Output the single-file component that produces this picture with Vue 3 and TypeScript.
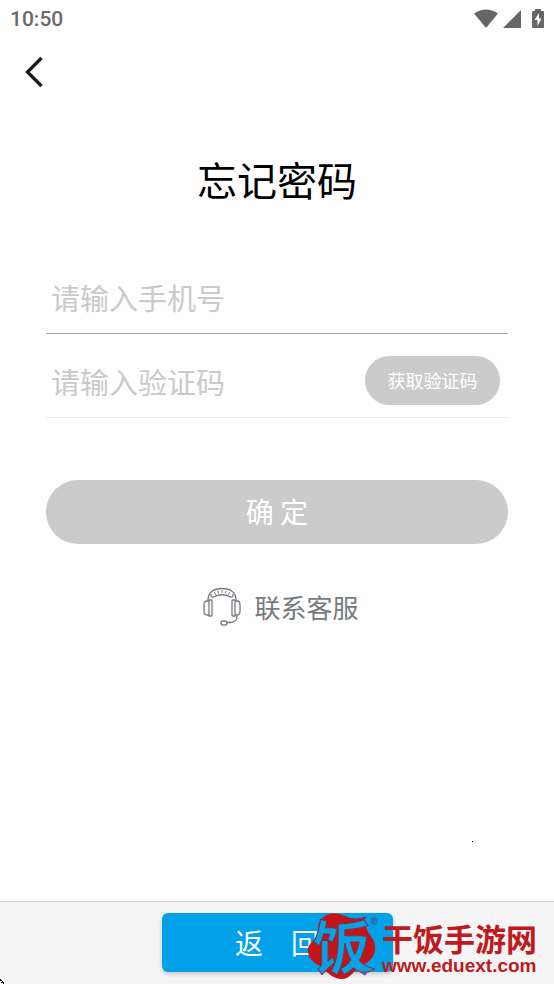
<script setup lang="ts">
import { ref } from 'vue'

const phone = ref('')
const code = ref('')
const time = '10:50'
</script>

<template>
  <div class="screen">
    <div class="status">
      <time>{{ time }}</time>
      <div class="indicators">
        <svg width="24" height="20" viewBox="0 0 24 20" aria-hidden="true">
          <path d="M0 4.500Q12-3.500 24 4.500L12 19z" />
        </svg>
        <svg width="18" height="20" viewBox="0 0 18 20" aria-hidden="true">
          <path d="M18 1V19H0z" />
        </svg>
        <svg width="12" height="20" viewBox="0 0 12 20" aria-hidden="true">
          <path fill-rule="evenodd" d="M3 0H9V2H11Q12 2 12 3V18Q12 19 11 19H1Q0 19 0 18V3Q0 2 1 2H3zM7 4L2.500 11H5.500V17L9.500 9.500H7z" />
        </svg>
      </div>
    </div>

    <header class="nav">
      <button type="button" class="back" aria-label="返回上一页">
        <svg width="20" height="32" viewBox="0 0 20 32" aria-hidden="true">
          <path d="M17.500 2L3.500 16L17.500 30" fill="none" stroke="#1b1c20" stroke-width="3.300" />
        </svg>
      </button>
    </header>

    <main>
      <h1>忘记密码</h1>
      <form @submit.prevent>
        <div class="field focused">
          <input v-model="phone" type="tel" placeholder="请输入手机号" aria-label="手机号" />
        </div>
        <div class="field">
          <input v-model="code" type="text" placeholder="请输入验证码" aria-label="验证码" />
          <button type="button" class="get-code">获取验证码</button>
        </div>
        <button type="submit" class="submit">确 定</button>
      </form>
      <a href="#" class="service">
        <svg width="38" height="40" viewBox="0 0 38 40" fill="none" stroke="#777a80" stroke-width="1.300" stroke-linecap="round" stroke-linejoin="round" aria-hidden="true">
          <path d="M5 13C5 5 11 1.500 19 1.500S33 5 33 13" />
          <path d="M8 7.500Q7.500 10.500 10.500 10Q19 5.500 27.500 10Q30.500 10.500 30 7.500" />
          <path d="M11.500 5.500L12.500 7.500M15 4L15.500 6M19 3.500V5.500M23 4L22.500 6M26.500 5.500L25.500 7.500" stroke-width="1" />
          <path d="M6 13H8Q9 13 9 14V28Q9 29 8 29H6zM6 14H4Q1 14 1 18V24Q1 28 4 28H6z" />
          <path d="M32 13H30Q29 13 29 14V28Q29 29 30 29H32zM32 14H34Q37 14 37 18V24Q37 28 34 28H32z" />
          <path d="M34 28V29Q34 35.500 27 35.500H24" />
          <rect x="18" y="34" width="6" height="4" rx="2" />
        </svg>
        <span>联系客服</span>
      </a>
    </main>

    <footer>
      <button type="button" class="return">返　回</button>
      <div class="brand">
        <svg class="mark" width="72" height="70" viewBox="0 0 72 70" aria-hidden="true">
          <path d="M13 9C17 2 26 0 34 2.500C42 6 48 8 58 5C58 9 58 13 60 18C63 24 69 29 68 37C68 46 60 51 51 56C44 62 41 70 29 66C21 63 18 57 11 53C4 49 0 43 1 36C3 30 8 29 10 22C12 17 10 14 13 9z" fill="#c31419" />
          <path d="M38 5C44 8 52 8 59 5C56 10 49 12 41 9" fill="#c31419" stroke="#7b3041" stroke-width="1" />
          <text x="6" y="57" class="mark-text">饭</text>
          <path d="M49 45Q56 55 68 57Q61 63 53 60Q46 56 42 50z" fill="#0aa0e5" />
          <path d="M49 58Q58 63 68 57Q61 56 56 52" fill="none" stroke="#94313f" stroke-width="1" />
          <circle cx="67" cy="9" r="3" fill="none" stroke="#35658b" stroke-width="1" />
          <path d="M66 11V7H68V9H66L68 11" fill="none" stroke="#35658b" stroke-width="1" />
        </svg>
        <div class="words">
          <strong>干饭手游网</strong>
          <span>www.eduext.com</span>
        </div>
      </div>
      <svg class="corner" width="5" height="5" viewBox="0 0 5 5" aria-hidden="true">
        <path d="M0 0H1V1H2V2H3V3H4V5H3V4H1V3H2V2H0z" fill="#111" />
      </svg>
    </footer>
    <i class="speck"></i>
  </div>
</template>

<style>
body {
  margin: 0;
}
</style>

<style scoped>
.screen {
  position: relative;
  display: flex;
  flex-direction: column;
  min-height: 100vh;
  background: #fefefe;
  font-family: "Noto Sans CJK SC", sans-serif;
}
button {
  padding: 0;
  border: 0;
  font-family: inherit;
  cursor: pointer;
}
.status {
  display: flex;
  align-items: center;
  justify-content: space-between;
  height: 38px;
  padding: 0 10px;
  color: #6a6a6a;
  font: 500 21px/38px Roboto, sans-serif;
}
.indicators {
  display: flex;
  gap: 5px;
  fill: #666;
}
.indicators svg:last-child {
  margin-left: 6px;
}
.nav {
  display: flex;
  align-items: center;
  height: 68px;
  padding: 0 24px;
}
.back {
  display: flex;
  background: none;
}
main {
  display: flex;
  flex-direction: column;
  align-items: center;
  padding: 43px 46px 0;
}
h1 {
  margin: 0 0 51px;
  color: #000;
  font-size: 40px;
  font-weight: 400;
  line-height: 60px;
}
form {
  width: 100%;
}
.field {
  display: flex;
  align-items: center;
  box-sizing: border-box;
  height: 84px;
  padding: 10px 8px 0 5px;
  border-bottom: 1px solid #ececec;
}
.focused {
  height: 74px;
  padding-top: 0;
  border-bottom-color: #aaa;
}
input {
  flex: 1;
  min-width: 0;
  padding: 0;
  border: 0;
  outline: 0;
  background: none;
  color: #222;
  font-family: inherit;
  font-size: 29px;
  line-height: 44px;
}
input::placeholder {
  color: #cacaca;
  opacity: 1;
}
.get-code {
  width: 135px;
  height: 49px;
  padding-bottom: 2px;
  border-radius: 25px;
  background: #cbcbcb;
  color: #fff;
  font-size: 18px;
}
.submit {
  width: 100%;
  height: 64px;
  margin-top: 62px;
  padding-bottom: 2px;
  border-radius: 32px;
  background: #cbcbcb;
  color: #fff;
  font-size: 28px;
}
.service {
  display: flex;
  align-items: center;
  gap: 13px;
  margin-top: 43px;
  padding-left: 8px;
  color: #777a80;
  font-size: 26px;
  line-height: 40px;
  text-decoration: none;
}
footer {
  position: relative;
  display: flex;
  justify-content: center;
  margin-top: auto;
  padding: 11px 0 12px;
  border-top: 1px solid #c8cacb;
  background: #f5f5f5;
}
.return {
  width: 231px;
  height: 59px;
  padding-bottom: 2px;
  border-radius: 6px;
  background: #02a0e9;
  box-shadow: 0 2px 4px #0003;
  color: #fff;
  font-size: 28px;
}
.brand {
  position: absolute;
  right: 17px;
  bottom: 2px;
  display: flex;
  align-items: flex-end;
  gap: 3px;
  color: #bd1b20;
}
.mark-text {
  fill: #0aa0e5;
  stroke: #7b3041;
  stroke-width: 1px;
  font-size: 58px;
  font-weight: 700;
}
.words {
  display: flex;
  flex-direction: column;
  padding-bottom: 6px;
}
.words strong {
  font-size: 31px;
  font-weight: 700;
  line-height: 36px;
}
.words span {
  font: 700 19px/20px "Liberation Sans", sans-serif;
}
.corner {
  position: absolute;
  bottom: 0;
  left: 0;
}
.speck {
  position: absolute;
  top: 841px;
  left: 472px;
  width: 1px;
  height: 1px;
  background: #000;
}
</style>
